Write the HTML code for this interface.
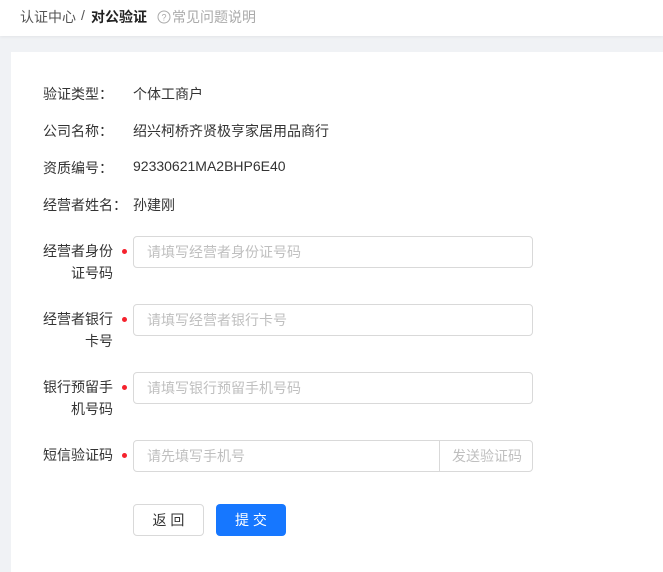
<!DOCTYPE html>
<html><head><meta charset="utf-8"><style>
*{margin:0;padding:0;box-sizing:border-box}
body{width:663px;height:565px;overflow:hidden;background:#f0f2f5;font-family:"Liberation Sans","Noto Sans CJK SC",sans-serif;font-size:14px;color:#333;position:relative}
.hdr{position:absolute;left:0;top:0;width:663px;height:36px;background:#fff;box-shadow:0 1px 3px rgba(0,0,0,.06)}
.abs{position:absolute;white-space:nowrap}
.card{position:absolute;left:11px;top:52px;width:660px;height:520px;background:#fff}
.lab{position:absolute;text-align:right;width:90px;line-height:22px;right:auto}
.inp{position:absolute;left:133px;width:400px;height:32px;border:1px solid #d9d9d9;border-radius:4px;color:#bfbfbf;padding-left:13px;line-height:30px}
.dot{position:absolute;left:122px;width:5px;height:5px;border-radius:50%;background:#f5222d}
</style></head><body>
<div class="hdr">
<span class="abs" style="left:20px;top:7px;color:#555">认证中心</span>
<span class="abs" style="left:81px;top:7px;color:#555">/</span>
<span class="abs" style="left:91px;top:7px;font-weight:bold;color:#222">对公验证</span>
<svg class="abs" style="left:157px;top:10px" width="14" height="14" viewBox="0 0 14 14"><circle cx="7" cy="7" r="6" fill="none" stroke="#aaa" stroke-width="1"/><text x="7" y="10.5" font-size="9" text-anchor="middle" fill="#aaa" font-family="Liberation Sans">?</text></svg>
<span class="abs" style="left:172px;top:7px;color:#aaa">常见问题说明</span>
</div>
<div class="card"></div>
<span class="abs" style="left:43px;top:84px">验证类型：</span><span class="abs" style="left:133px;top:84px">个体工商户</span>
<span class="abs" style="left:43px;top:121px">公司名称：</span><span class="abs" style="left:133px;top:121px">绍兴柯桥齐贤极亨家居用品商行</span>
<span class="abs" style="left:43px;top:158px">资质编号：</span><span class="abs" style="left:133px;top:158px">92330621MA2BHP6E40</span>
<span class="abs" style="left:43px;top:195px">经营者姓名：</span><span class="abs" style="left:133px;top:195px">孙建刚</span>

<div class="lab" style="left:23px;top:240px">经营者身份<br>证号码</div><div class="dot" style="top:249px"></div>
<div class="inp" style="top:236px">请填写经营者身份证号码</div>
<div class="lab" style="left:23px;top:308px">经营者银行<br>卡号</div><div class="dot" style="top:317px"></div>
<div class="inp" style="top:304px">请填写经营者银行卡号</div>
<div class="lab" style="left:23px;top:376px">银行预留手<br>机号码</div><div class="dot" style="top:385px"></div>
<div class="inp" style="top:372px">请填写银行预留手机号码</div>
<div class="lab" style="left:23px;top:444px">短信验证码</div><div class="dot" style="top:453px"></div>
<div class="inp" style="top:440px;width:307px;border-radius:4px 0 0 4px">请先填写手机号</div>
<div class="inp" style="top:440px;left:439px;width:94px;border-radius:0 4px 4px 0;padding-left:12px;background:#fff">发送验证码</div>

<div class="abs" style="left:133px;top:504px;width:71px;height:32px;border:1px solid #d9d9d9;border-radius:4px;text-align:center;line-height:30px;background:#fff">返 回</div>
<div class="abs" style="left:216px;top:504px;width:70px;height:32px;border-radius:4px;text-align:center;line-height:32px;background:#1677ff;color:#fff">提 交</div>
</body></html>
